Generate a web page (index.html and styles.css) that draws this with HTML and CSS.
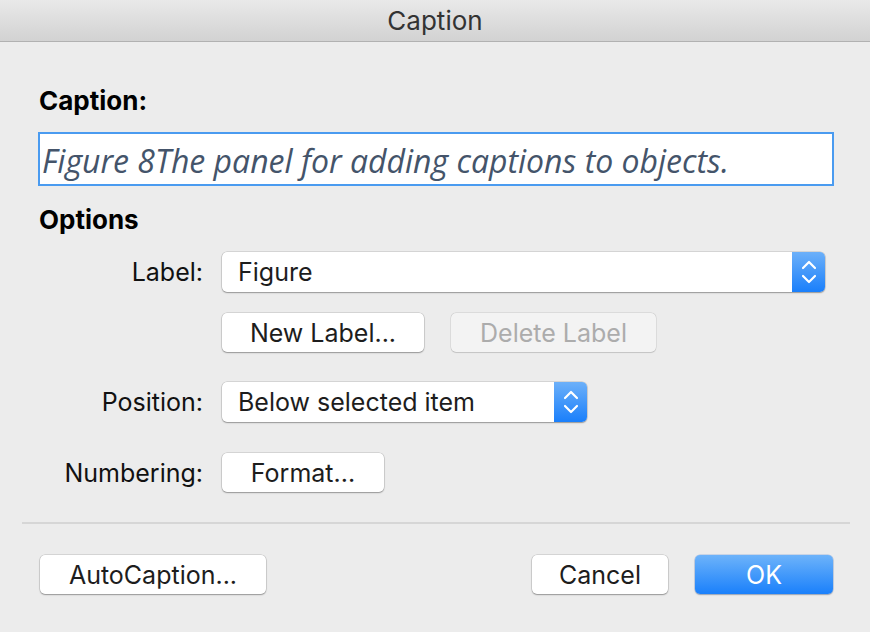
FILE: index.html
```html
<!DOCTYPE html>
<html>
<head>
<meta charset="utf-8">
<link rel="stylesheet" href="styles.css">
</head>
<body>
<div class="window">
  <div class="titlebar">Caption</div>
  <div class="content">
    <div class="heading first">Caption:</div>
    <div class="caption-input">Figure 8The panel for adding captions to objects.</div>
    <div class="heading options">Options</div>
    <div class="form">
      <div class="lbl">Label:</div>
      <div class="select wide">
        <span class="sel-text">Figure</span>
        <span class="stepper"><svg width="16" height="24" viewBox="0 0 16 24"><path d="M2 8 L8 2 L14 8 M2 16 L8 22 L14 16" fill="none" stroke="#fff" stroke-width="2.2" stroke-linecap="round" stroke-linejoin="round"/></svg></span>
      </div>
      <div class="lbl"></div>
      <div class="btn-row">
        <div class="btn newlabel">New Label...</div>
        <div class="btn disabled dellabel">Delete Label</div>
      </div>
      <div class="lbl row3">Position:</div>
      <div class="select narrow row3">
        <span class="sel-text">Below selected item</span>
        <span class="stepper"><svg width="16" height="24" viewBox="0 0 16 24"><path d="M2 8 L8 2 L14 8 M2 16 L8 22 L14 16" fill="none" stroke="#fff" stroke-width="2.2" stroke-linecap="round" stroke-linejoin="round"/></svg></span>
      </div>
      <div class="lbl row4">Numbering:</div>
      <div class="btn-row row4">
        <div class="btn format">Format...</div>
      </div>
    </div>
    <div class="separator"></div>
    <div class="footer">
      <div class="btn autocap">AutoCaption...</div>
      <div class="spacer"></div>
      <div class="btn cancel">Cancel</div>
      <div class="btn primary ok">OK</div>
    </div>
  </div>
</div>
</body>
</html>
```
FILE: styles.css
```css
* { box-sizing: border-box; }
html, body { margin: 0; padding: 0; }
body {
  width: 870px;
  height: 632px;
  background: #ececec;
  font-family: "Inter", "Liberation Sans", sans-serif;
  color: #1d1d1d;
  overflow: hidden;
}
.window { width: 870px; height: 632px; display: flex; flex-direction: column; }
.titlebar {
  height: 42px;
  background: linear-gradient(#e9e9e9, #d2d2d2);
  border-bottom: 1px solid #b1b1b1;
  text-align: center;
  font-family: "Inter", "Liberation Sans", sans-serif;
  font-size: 26px;
  line-height: 41px;
  color: #333;
}
.content { padding: 0 36px 0 38px; display: flex; flex-direction: column; }
.heading {
  font-weight: 700;
  font-size: 26px;
  line-height: 30px;
  color: #000;
  padding-left: 1px;
}
.heading.first { margin-top: 44px; }
.caption-input {
  margin-top: 16px;
  height: 54px;
  border: 2px solid #4a9bf0;
  background: #fff;
  font-family: "Open Sans", sans-serif;
  font-style: italic;
  font-size: 32px;
  line-height: 54px;
  color: #44546a;
  padding-left: 2px;
  white-space: nowrap;
  overflow: hidden;
}
.heading.options { margin-top: 19px; }
.form {
  margin-top: 17px;
  display: grid;
  grid-template-columns: 184px 1fr;
  row-gap: 21px;
  align-items: center;
}
.row3 { margin-top: 9px; }
.row4 { margin-top: 10px; }
.lbl {
  text-align: right;
  padding-right: 19px;
  font-size: 25px;
  color: #111;
}
.select {
  height: 40px;
  background: #fff;
  border-radius: 5px;
  box-shadow: 0 0 0 0.5px rgba(0,0,0,0.18), 0 1px 1.5px rgba(0,0,0,0.3);
  display: flex;
  align-items: center;
  overflow: hidden;
}
.select.wide { width: 603px; }
.select.narrow { width: 365px; }
.sel-text { flex: 1; padding-left: 16px; font-size: 25px; color: #1d1d1d; }
.stepper {
  width: 33px;
  height: 100%;
  background: linear-gradient(#6cb0f9, #1a7ffb);
  display: flex;
  align-items: center;
  justify-content: center;
}
.btn-row { display: flex; gap: 27px; }
.btn {
  height: 39px;
  background: #fff;
  border-radius: 5px;
  box-shadow: 0 0 0 0.5px rgba(0,0,0,0.18), 0 1px 1.5px rgba(0,0,0,0.3);
  display: flex;
  align-items: center;
  justify-content: center;
  font-size: 25px;
  color: #1d1d1d;
}
.btn.disabled {
  background: #f3f3f3;
  color: #acacac;
  box-shadow: 0 0 0 0.5px rgba(0,0,0,0.12), 0 0.5px 1px rgba(0,0,0,0.12);
}
.newlabel { width: 202px; }
.dellabel { width: 205px; }
.format { width: 162px; }
.separator {
  margin: 30px -16px 0 -16px;
  height: 2px;
  background: #d6d6d6;
}
.footer { margin-top: 31px; display: flex; align-items: center; padding-left: 2px; padding-right: 1px; }
.spacer { flex: 1; }
.autocap { width: 226px; }
.cancel { width: 136px; margin-right: 27px; }
.ok { width: 138px; }
.btn.primary {
  background: linear-gradient(#6db3fa, #1a80fb);
  color: #fff;
  box-shadow: 0 0 0 0.5px rgba(0,80,200,0.3), 0 1px 1.5px rgba(0,0,0,0.25);
}
```
